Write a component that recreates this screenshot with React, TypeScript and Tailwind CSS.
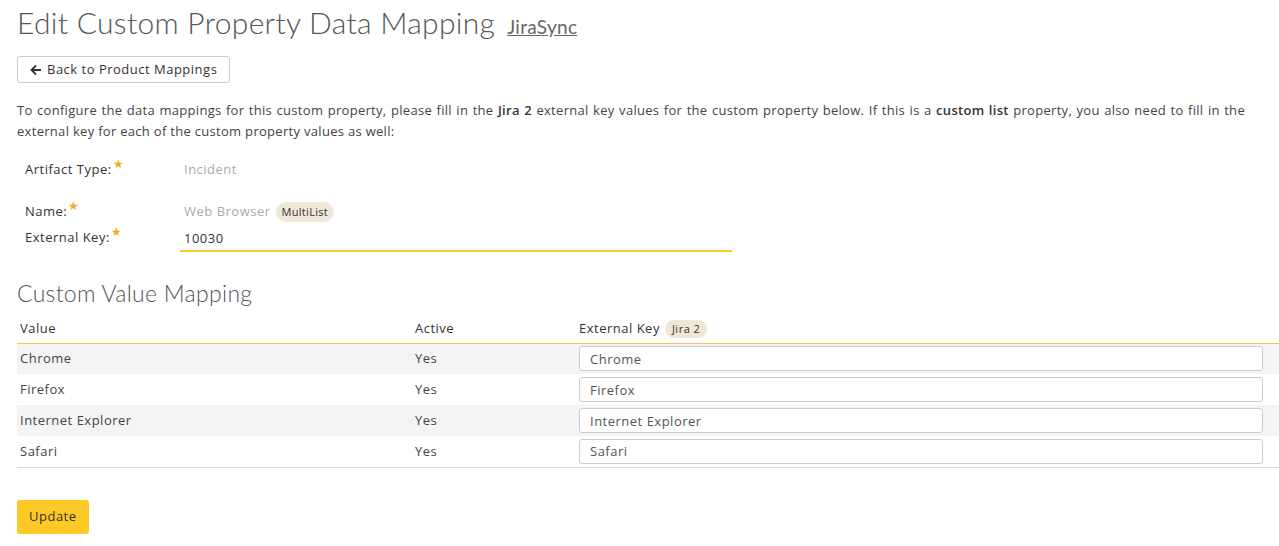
import React, { useState } from "react";

const rows = [
  { value: "Chrome", active: "Yes", key: "Chrome" },
  { value: "Firefox", active: "Yes", key: "Firefox" },
  { value: "Internet Explorer", active: "Yes", key: "Internet Explorer" },
  { value: "Safari", active: "Yes", key: "Safari" },
];

const Star = () => (
  <span className="relative -top-[6px] ml-[1px] text-[12px] leading-none text-[#f5a623]">★</span>
);

const App = () => {
  const [externalKey, setExternalKey] = useState("10030");
  const [keys, setKeys] = useState(rows.map((r) => r.key));

  return (
    <div className="min-h-[546px] bg-white px-[17px] text-[13px] tracking-[0.5px] text-[#333] [font-family:'Open_Sans',sans-serif]">
      <h1 className="flex items-baseline gap-3 pt-[2px] text-[30px] font-light leading-[40px] tracking-[0.3px] text-[#555] [font-family:Lato,sans-serif]">
        Edit Custom Property Data Mapping
        <a href="#" className="text-[19px] font-normal tracking-[0.3px] text-[#666] underline">
          JiraSync
        </a>
      </h1>

      <button className="mt-[9px] flex h-[27px] items-center gap-[5px] rounded-[3px] border border-[#ccc] bg-white px-[12px] text-[13px] text-[#333]">
        <svg width="12" height="12" viewBox="0 0 12 12" className="text-[#333]">
          <path d="M6 1.5 1.5 6 6 10.5M1.8 6H11" fill="none" stroke="currentColor" strokeWidth="1.8" />
        </svg>
        Back to Product Mappings
      </button>

      <p className="mt-[17px] w-[1228px] leading-[21px] tracking-[0.3px] text-[#444]">
        <span className="block text-justify [text-align-last:justify]">
          To configure the data mappings for this custom property, please fill in the <b className="font-semibold text-[#333]">Jira 2</b> external
          key values for the custom property below. If this is a <b className="font-semibold text-[#333]">custom list</b> property, you also need
          to fill in the
        </span>
        <span className="block">external key for each of the custom property values as well:</span>
      </p>

      <div className="mt-[16px] pl-[8px]">
        <div className="flex h-[24px] items-center">
          <div className="w-[159px] text-[#333]">
            Artifact Type:<Star />
          </div>
          <div className="text-[#aaa]">Incident</div>
        </div>

        <div className="mt-[18px] flex h-[24px] items-center">
          <div className="w-[159px] text-[#333]">
            Name:<Star />
          </div>
          <div className="flex items-center gap-[5px] text-[#aaa]">
            Web Browser
            <span className="rounded-full bg-[#efe8d7] px-[6px] py-[2px] text-[11px] tracking-[0.3px] text-[#333]">MultiList</span>
          </div>
        </div>

        <div className="mt-[2px] flex items-start">
          <div className="flex h-[24px] w-[155px] items-center text-[#333]">
            External Key:<Star />
          </div>
          <input
            value={externalKey}
            onChange={(e) => setExternalKey(e.target.value)}
            className="h-[26px] w-[552px] border-b-2 border-[#fcc72a] bg-white px-[4px] text-[13px] tracking-[0.5px] text-[#333] outline-none"
          />
        </div>
      </div>

      <h2 className="mt-[26px] text-[23px] font-light leading-[30px] tracking-[0.3px] text-[#555] [font-family:Lato,sans-serif]">
        Custom Value Mapping
      </h2>

      <table className="mt-[7px] w-[1262px] border-collapse text-[13px]">
        <thead>
          <tr className="border-b border-[#f2c94c]">
            <th className="h-[28px] w-[398px] px-[3px] text-left font-normal text-[#333]">Value</th>
            <th className="w-[164px] text-left font-normal text-[#333]">Active</th>
            <th className="text-left font-normal text-[#333]">
              <span className="inline-flex items-center gap-[5px]">
                External Key
                <span className="rounded-full bg-[#efe8d7] px-[7px] py-[1px] text-[11px]">Jira 2</span>
              </span>
            </th>
          </tr>
        </thead>
        <tbody>
          {rows.map((r, i) => (
            <tr key={r.value} className={i % 2 === 0 ? "bg-[#f4f4f4]" : "bg-white"}>
              <td className="h-[31px] px-[3px] text-[#444]">{r.value}</td>
              <td className="text-[#444]">{r.active}</td>
              <td className="pr-[16px]">
                <input
                  value={keys[i]}
                  onChange={(e) => setKeys(keys.map((k, j) => (j === i ? e.target.value : k)))}
                  className="block h-[25px] w-full rounded-[3px] border border-[#ccc] bg-white px-[10px] text-[13px] tracking-[0.5px] text-[#555] outline-none"
                />
              </td>
            </tr>
          ))}
          <tr className="border-t border-[#ddd]">
            <td colSpan={3}></td>
          </tr>
        </tbody>
      </table>

      <button className="mt-[32px] h-[34px] rounded-[3px] bg-[#fcc926] px-[12px] text-[13px] text-[#333]">
        Update
      </button>
    </div>
  );
};

export default App;
